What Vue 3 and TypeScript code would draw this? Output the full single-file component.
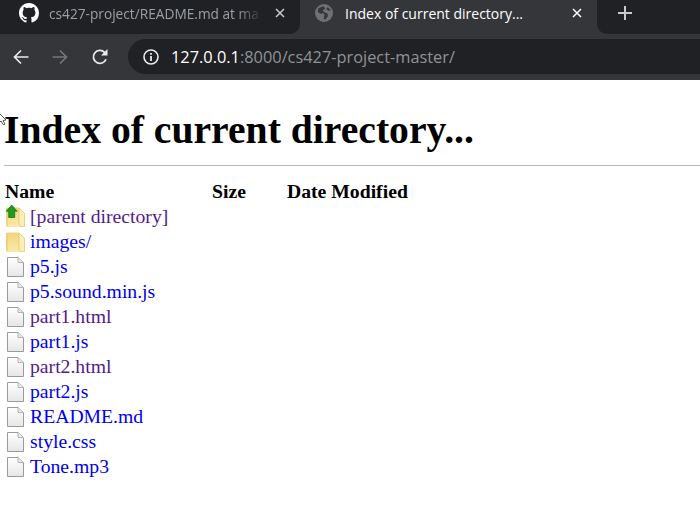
<script setup lang="ts">
interface Entry {
  name: string
  icon: 'parent' | 'folder' | 'file'
  visited?: boolean
}

const entries: Entry[] = [
  { name: '[parent directory]', icon: 'parent', visited: true },
  { name: 'images/', icon: 'folder' },
  { name: 'p5.js', icon: 'file' },
  { name: 'p5.sound.min.js', icon: 'file' },
  { name: 'part1.html', icon: 'file', visited: true },
  { name: 'part1.js', icon: 'file' },
  { name: 'part2.html', icon: 'file', visited: true },
  { name: 'part2.js', icon: 'file' },
  { name: 'README.md', icon: 'file' },
  { name: 'style.css', icon: 'file' },
  { name: 'Tone.mp3', icon: 'file' },
]
</script>

<template>
  <div class="window">
    <svg class="defs" width="0" height="0">
      <defs>
        <linearGradient id="paper" x1="0" y1="0" x2="0" y2="1">
          <stop offset="0" stop-color="#ffffff" />
          <stop offset="1" stop-color="#e6e6e6" />
        </linearGradient>
        <linearGradient id="folder" x1="0" y1="0" x2="0" y2="1">
          <stop offset="0" stop-color="#f2d47c" />
          <stop offset="1" stop-color="#fbeaa8" />
        </linearGradient>
      </defs>
    </svg>
    <div class="tabstrip">
      <div class="tab tab-inactive">
        <svg class="favicon" viewBox="0 0 16 16" width="20" height="20">
          <path fill="#fff" d="M8 0C3.58 0 0 3.58 0 8c0 3.54 2.29 6.53 5.47 7.59.4.07.55-.17.55-.38 0-.19-.01-.82-.01-1.49-2.01.37-2.53-.49-2.69-.94-.09-.23-.48-.94-.82-1.13-.28-.15-.68-.52-.01-.53.63-.01 1.08.58 1.23.82.72 1.21 1.87.87 2.33.66.07-.52.28-.87.51-1.07-1.78-.2-3.64-.89-3.64-3.95 0-.87.31-1.59.82-2.15-.08-.2-.36-1.02.08-2.12 0 0 .67-.21 2.2.82.64-.18 1.32-.27 2-.27s1.36.09 2 .27c1.53-1.04 2.2-.82 2.2-.82.44 1.1.16 1.92.08 2.12.51.56.82 1.27.82 2.15 0 3.07-1.87 3.75-3.65 3.95.29.25.54.73.54 1.48 0 1.07-.01 1.93-.01 2.2 0 .21.15.46.55.38A8.01 8.01 0 0 0 16 8c0-4.42-3.58-8-8-8z" />
        </svg>
        <span class="tab-title tab-title-fade">cs427-project/README.md at ma</span>
        <svg class="close" viewBox="0 0 10 10" width="10" height="10">
          <path d="M1 1l8 8M9 1l-8 8" stroke="#c8cacc" stroke-width="1.5" fill="none" />
        </svg>
      </div>
      <div class="tab tab-active">
        <svg class="favicon" viewBox="0 0 16 16" width="18" height="18">
          <circle cx="8" cy="8" r="8" fill="#6f7175" />
          <path fill="#35363a" d="M7.500 2 3 3.800 2.500 7l2.900 1.800L7 8l1.500 1.400-.8 3.800 1.300.8 2.500-3.200-.4-2.400-3.200-1.200-1-1.600 2.200-1.600zM11.200 2.800l-1.200 1.800 2.200 1.500 1.700-.4c-.5-1.200-1.400-2.200-2.700-2.900z" />
        </svg>
        <span class="tab-title tab-title-active">Index of current directory...</span>
        <svg class="close" viewBox="0 0 10 10" width="10" height="10">
          <path d="M1 1l8 8M9 1l-8 8" stroke="#fff" stroke-width="1.5" fill="none" />
        </svg>
      </div>
      <div class="tab-rest">
        <svg class="newtab" viewBox="0 0 14 14" width="14" height="14">
          <path d="M7 0v14M0 7h14" stroke="#c8cacc" stroke-width="2" fill="none" />
        </svg>
      </div>
    </div>
    <div class="toolbar">
      <svg class="nav" viewBox="0 0 16 16" width="16" height="16">
        <path d="M15.500 8H2M8 1.500 1.500 8 8 14.500" stroke="#e8eaed" stroke-width="1.7" fill="none" />
      </svg>
      <svg class="nav" viewBox="0 0 16 16" width="16" height="16">
        <path d="M.5 8H14M8 1.500 14.500 8 8 14.500" stroke="#74767a" stroke-width="1.7" fill="none" />
      </svg>
      <svg class="nav" viewBox="0 0 18 18" width="18" height="18">
        <path d="M15 11.200A6.500 6.500 0 1 1 13.600 4.400" stroke="#e8eaed" stroke-width="1.8" fill="none" />
        <path d="M16.500 1v6.500H10Z" fill="#e8eaed" />
      </svg>
      <div class="omnibox">
        <svg viewBox="0 0 16 16" width="16" height="16">
          <circle cx="8" cy="8" r="7" stroke="#e8eaed" stroke-width="1.6" fill="none" />
          <path d="M8 7v5M8 4v1.800" stroke="#e8eaed" stroke-width="1.800" fill="none" />
        </svg>
        <span class="url"><span class="host">127.0.0.1</span>:8000/cs427-project-master/</span>
      </div>
    </div>
    <main class="page">
      <h1>Index of current directory...</h1>
      <hr />
      <table>
        <thead>
          <tr>
            <th class="col-name">Name</th>
            <th class="col-size">Size</th>
            <th>Date Modified</th>
          </tr>
        </thead>
        <tbody>
          <tr v-for="entry in entries" :key="entry.name">
            <td class="name-cell" colspan="3">
              <svg class="file-icon" viewBox="0 0 20 20" width="20" height="20">
                <template v-if="entry.icon === 'file'">
                  <path d="M2.500 .5H13L18.500 5.500V19.500H2.500Z" fill="url(#paper)" stroke="#9a9a9a" />
                  <path d="M13 .5V5.500H18.500" fill="#e8e8e8" stroke="#b4b4b4" />
                </template>
                <template v-else>
                  <path d="M1 1.500 2 .5H14L19.500 6V19L18.500 20H2L1 19Z" fill="url(#folder)" />
                  <path d="M14 1 19.500 6.500V19.500H15.500L14 17Z" fill="#fbeeb8" stroke="#e3c46a" stroke-width=".7" />
                  <path d="M2 1V19.500" stroke="#e6c768" />
                </template>
                <path v-if="entry.icon === 'parent'" d="M6.700 -2 12.200 4.200H9.700V10.500H3.700V4.200H1.200Z" fill="#1e9a1e" stroke="#0f6e0f" stroke-width=".7" />
              </svg>
              <a href="#" :class="{ visited: entry.visited }">{{ entry.name }}</a>
            </td>
          </tr>
        </tbody>
      </table>
      <svg class="cursor" viewBox="0 0 8 14" width="8" height="14">
        <path d="M-3 0 6 9 3 9.500 5 13 3.500 14 1 10-1 12Z" fill="#fff" stroke="#333" stroke-width=".8" />
      </svg>
    </main>
  </div>
</template>

<style scoped>
.window {
  width: 700px;
  height: 528px;
  overflow: hidden;
  background: #fff;
  display: flex;
  flex-direction: column;
}
.defs {
  position: absolute;
}
.tabstrip {
  height: 34px;
  flex: none;
  display: flex;
  align-items: stretch;
  background: #35363a;
}
.tab {
  display: flex;
  align-items: center;
  flex: none;
  overflow: hidden;
  box-sizing: border-box;
  font: 14px "Open Sans", sans-serif;
}
.tab-inactive {
  width: 300px;
  padding: 0 15px 8px 19px;
  background: #202124;
  border-bottom-right-radius: 10px;
}
.tab-active {
  width: 297px;
  padding: 0 15px 8px;
}
.tab-rest {
  flex: 1;
  display: flex;
  align-items: center;
  padding: 0 0 8px 21px;
  background: #202124;
  border-bottom-left-radius: 10px;
}
.favicon {
  flex: none;
  margin-right: 10px;
}
.tab-active .favicon {
  margin-right: 12px;
}
.tab-title {
  flex: 1;
  min-width: 0;
  white-space: nowrap;
  color: #9aa0a6;
}
.tab-title-fade {
  font-size: 13.700px;
  -webkit-mask-image: linear-gradient(to right, #000 88%, transparent 100%);
  mask-image: linear-gradient(to right, #000 88%, transparent 100%);
}
.tab-title-active {
  color: #fff;
}
.close {
  flex: none;
  margin-left: 12px;
}
.toolbar {
  height: 46px;
  flex: none;
  box-sizing: border-box;
  padding: 5px 0 6px 13px;
  background: #35363a;
  display: flex;
  align-items: center;
  gap: 23px;
}
.omnibox {
  flex: 1;
  height: 35px;
  margin-left: -4px;
  margin-right: -20px;
  padding-left: 15px;
  display: flex;
  align-items: center;
  gap: 12px;
  background: #202124;
  border-radius: 18px;
  font: 16.350px "Open Sans", sans-serif;
  color: #909396;
}
.host {
  color: #fff;
}
.page {
  position: relative;
  flex: 1;
  padding: 0 0 0 4px;
  font-family: "Liberation Serif", "Times New Roman", serif;
  font-size: 19.700px;
  color: #000;
}
h1 {
  margin: 28px 0 13px;
  font-size: 39.660px;
  line-height: 44px;
  font-weight: 700;
}
hr {
  margin: 0 0 13px;
  border: none;
  border-top: 1px solid #bbb;
}
table {
  border-collapse: collapse;
}
th {
  padding: 0 0 0 1px;
  text-align: left;
  font-weight: 700;
  line-height: 25px;
}
.col-name {
  width: 206px;
}
.col-size {
  width: 74px;
}
td {
  padding: 0 0 0 1px;
  height: 25px;
}
.name-cell {
  display: flex;
  align-items: center;
  gap: 5px;
}
a {
  color: #0000ee;
  text-decoration: none;
}
a.visited {
  color: #551a8b;
}
.file-icon {
  flex: none;
  overflow: visible;
}
.cursor {
  position: absolute;
  left: 0;
  top: 31px;
}
</style>
